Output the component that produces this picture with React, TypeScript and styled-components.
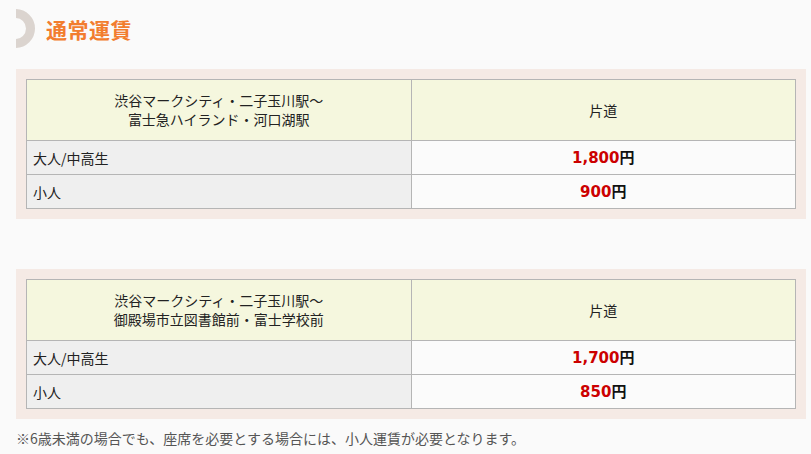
import styled, { createGlobalStyle } from "styled-components";

type FareRow = {
  label: string;
  price: string;
};

type FareTableData = {
  from: string;
  to: string;
  rows: FareRow[];
};

const FARES: FareTableData[] = [
  {
    from: "渋谷マークシティ・二子玉川駅～",
    to: "富士急ハイランド・河口湖駅",
    rows: [
      { label: "大人/中高生", price: "1,800" },
      { label: "小人", price: "900" },
    ],
  },
  {
    from: "渋谷マークシティ・二子玉川駅～",
    to: "御殿場市立図書館前・富士学校前",
    rows: [
      { label: "大人/中高生", price: "1,700" },
      { label: "小人", price: "850" },
    ],
  },
];

const GlobalStyle = createGlobalStyle`
  body {
    margin: 0;
    background: #fafafa;
    font-family: "Noto Sans CJK JP", "Noto Sans", sans-serif;
    color: #333;
  }
`;

const App = (): JSX.Element => {
  return (
    <>
      <GlobalStyle />
      <Page>
        <Heading>
          <RingClip>
            <Ring />
          </RingClip>
          <HeadingText>通常運賃</HeadingText>
        </Heading>

        <Sections>
          {FARES.map((fare) => (
            <Panel key={fare.to}>
              <Table>
                <thead>
                  <tr>
                    <HeadCell>
                      <HeadLine>{fare.from}</HeadLine>
                      <HeadLine>{fare.to}</HeadLine>
                    </HeadCell>
                    <HeadCell>片道</HeadCell>
                  </tr>
                </thead>
                <tbody>
                  {fare.rows.map((row) => (
                    <tr key={row.label}>
                      <LabelCell>{row.label}</LabelCell>
                      <PriceCell>
                        <Price>{row.price}</Price>
                        <Yen>円</Yen>
                      </PriceCell>
                    </tr>
                  ))}
                </tbody>
              </Table>
            </Panel>
          ))}
        </Sections>

        <Note>※6歳未満の場合でも、座席を必要とする場合には、小人運賃が必要となります。</Note>
      </Page>
    </>
  );
};

let Page = styled.div`
  padding: 9px 5px 0 16px;
`;

let Heading = styled.div`
  display: flex;
  flex-direction: row;
  align-items: center;
  gap: 10px;
  height: 39px;
`;

let RingClip = styled.div`
  width: 20px;
  height: 39px;
  overflow: hidden;
`;

let Ring = styled.div`
  width: 39px;
  height: 39px;
  margin-left: -20px;
  box-sizing: border-box;
  border: 9px solid #dbd4cf;
  border-radius: 50%;
`;

let HeadingText = styled.h2`
  margin: 0;
  font-size: 21px;
  font-weight: bold;
  color: #f27d2f;
  letter-spacing: 0.5px;
`;

let Sections = styled.div`
  display: flex;
  flex-direction: column;
  gap: 50px;
  margin-top: 21px;
`;

let Panel = styled.div`
  background: #f5eae5;
  padding: 10px;
`;

let Table = styled.table`
  width: 100%;
  border-collapse: collapse;
  table-layout: fixed;
  font-size: 14px;
  line-height: 20px;
`;

let HeadCell = styled.th`
  height: 60px;
  background: #f5f7de;
  border: 1px solid #b5b5b5;
  font-weight: normal;
  text-align: center;
  line-height: 19px;
  color: #222;
  padding: 0 6px;
`;

let HeadLine = styled.div`
  line-height: 19px;
`;

let LabelCell = styled.td`
  height: 33px;
  background: #efefef;
  border: 1px solid #b5b5b5;
  padding: 0 6px;
  color: #222;
`;

let PriceCell = styled.td`
  height: 33px;
  padding: 0;
  background: #fbfbfb;
  border: 1px solid #b5b5b5;
  text-align: center;
`;

let Price = styled.span`
  color: #cc0000;
  font-family: "DejaVu Sans", "Noto Sans CJK JP", sans-serif;
  font-size: 15px;
  font-weight: bold;
`;

let Yen = styled.span`
  color: #111;
  font-size: 15px;
  font-weight: bold;
`;

let Note = styled.p`
  margin: 9px 0 0;
  font-size: 14px;
  line-height: 20px;
  color: #555;
`;

export default App;
